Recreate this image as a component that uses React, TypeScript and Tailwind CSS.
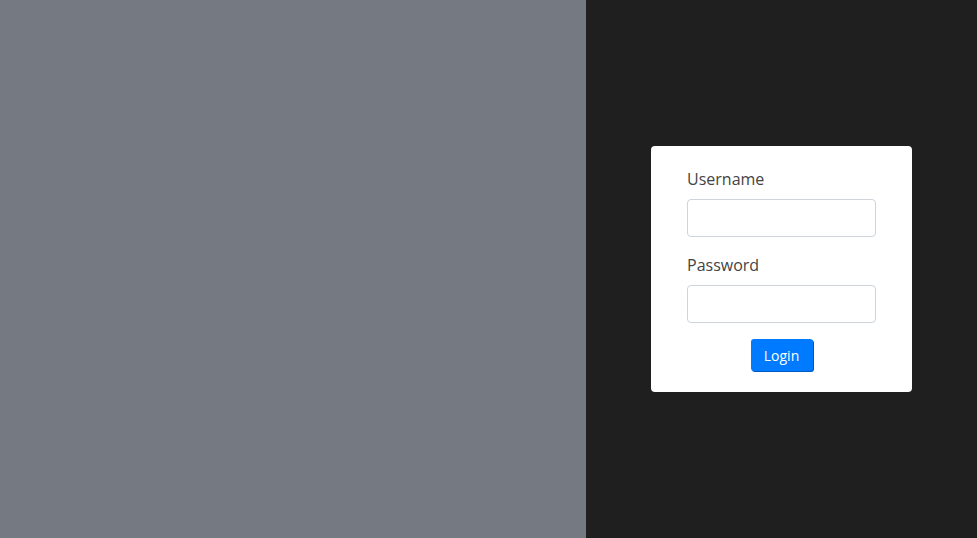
import { useState } from 'react';

function App() {
  const [username, setUsername] = useState('');
  const [password, setPassword] = useState('');

  return (
    <div className="flex h-screen w-full font-['Open_Sans',sans-serif]">
      <div className="w-[586px] shrink-0 bg-[#757981]" />
      <div className="flex flex-1 items-center justify-center bg-[#1f1f1f]">
        <form
          className="w-[261px] rounded-[4px] bg-white pt-[21px] pr-[36px] pb-[21px] pl-[36px]"
          onSubmit={(e) => e.preventDefault()}
        >
          <Field label="Username" value={username} onChange={setUsername} />
          <Field
            label="Password"
            type="password"
            value={password}
            onChange={setPassword}
          />
          <div className="flex justify-center">
            <button
              type="submit"
              className="h-[32px] w-[62px] rounded-[3px] bg-[#007bff] text-[14px] leading-[21px] text-white shadow-[1px_1px_0_#0058c4]"
            >
              Login
            </button>
          </div>
        </form>
      </div>
    </div>
  );
}

type FieldProps = {
  label: string;
  type?: string;
  value: string;
  onChange: (v: string) => void;
};

const Field = ({ label, type = 'text', value, onChange }: FieldProps) => {
  return (
    <div className="mb-4 flex flex-col">
      <label className="mb-2 text-[16px] leading-6 text-[#444]">{label}</label>
      <input
        type={type}
        value={value}
        onChange={(e) => onChange(e.target.value)}
        className="h-[38px] w-full rounded-[4px] border border-[#ced4da] px-3 outline-none"
      />
    </div>
  );
};

export default App;
